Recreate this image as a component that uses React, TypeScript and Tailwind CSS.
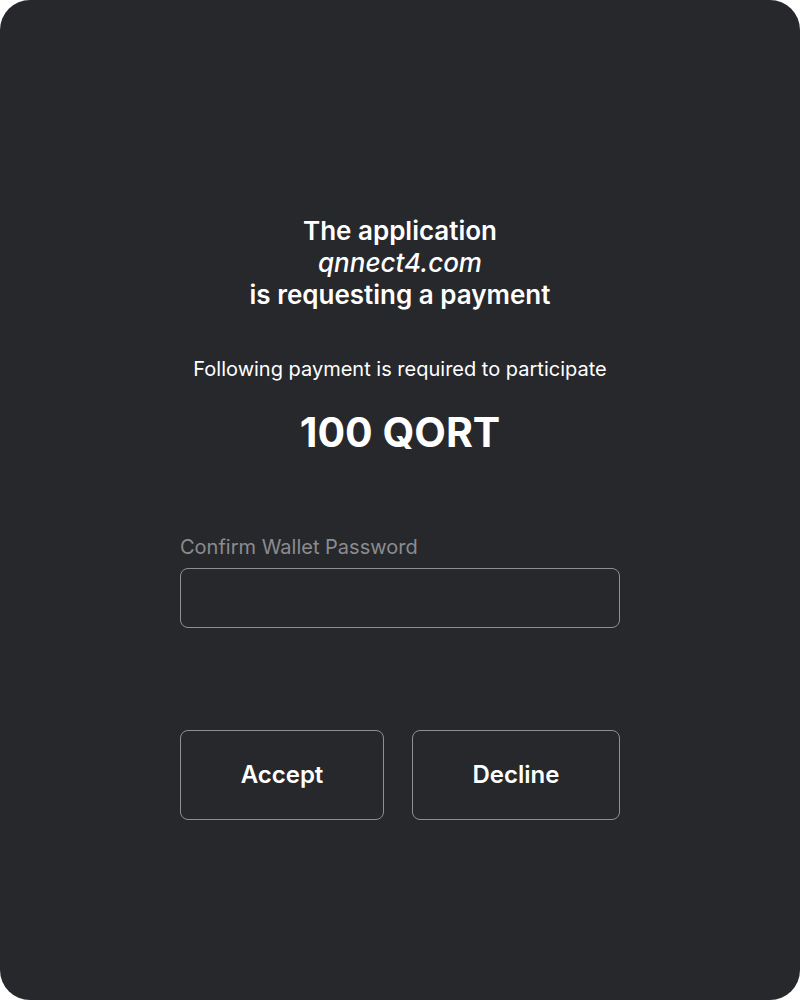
export default function App() {
  return (
    <div className="w-[800px] h-[1000px] bg-white" style={{ fontFamily: "Inter, 'Noto Sans', sans-serif" }}>
      <div className="w-full h-full rounded-[30px] bg-[#27282c] flex flex-col items-center pt-[215px] text-white">
        <div className="text-[26px] leading-[32px] font-semibold text-center">
          <div>The application</div>
          <div className="italic font-medium">qnnect4.com</div>
          <div>is requesting a payment</div>
        </div>
        <div className="mt-[44px] text-[20px] leading-[28px] text-center">
          Following payment is required to participate
        </div>
        <div className="mt-[25px] text-[41px] leading-[48px] font-bold">100 QORT</div>
        <div className="mt-[77px] w-[440px]">
          <div className="text-[20px] leading-[28px] text-[#8b8c90]">Confirm Wallet Password</div>
          <input
            type="password"
            className="mt-[7px] w-full h-[60px] rounded-[8px] border border-[#8e8f93] bg-transparent outline-none px-3 text-white"
          />
        </div>
        <div className="mt-[102px] w-[440px] flex gap-[28px]">
          <button className="w-[204px] h-[90px] rounded-[8px] border border-[#8e8f93] text-[24px] font-semibold">
            Accept
          </button>
          <button className="flex-1 h-[90px] rounded-[8px] border border-[#8e8f93] text-[24px] font-semibold">
            Decline
          </button>
        </div>
      </div>
    </div>
  );
}
